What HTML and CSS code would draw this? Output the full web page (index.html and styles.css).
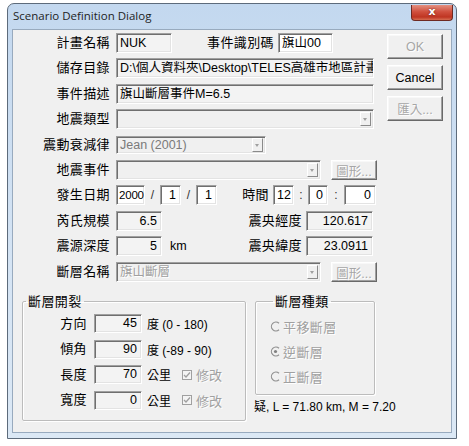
FILE: index.html
```html
<!DOCTYPE html>
<html lang="zh-Hant">
<head>
    <meta charset="UTF-8">
    <title>Scenario Definition Dialog</title>
    <link rel="stylesheet" href="styles.css">
</head>
<body>

<div class="window">
    <div class="titlebar">
        <span class="title">Scenario Definition Dialog</span>
        <span class="close">x</span>
    </div>

    <div class="client">
        <div class="top">
            <div class="form">
                <div class="row">
                    <span class="lbl">計畫名稱</span>
                    <div class="box w56">NUK</div>
                    <span class="lbl2 w102">事件識別碼</span>
                    <div class="box white w55">旗山00</div>
                </div>
                <div class="row">
                    <span class="lbl">儲存目錄</span>
                    <div class="box w258">D:\個人資料夾\Desktop\TELES高雄市地區計畫</div>
                </div>
                <div class="row">
                    <span class="lbl">事件描述</span>
                    <div class="box w258">旗山斷層事件M=6.5</div>
                </div>
                <div class="row">
                    <span class="lbl">地震類型</span>
                    <div class="combo w258"><span class="val"></span><span class="arrow"></span></div>
                </div>
                <div class="row">
                    <span class="lbl">震動衰減律</span>
                    <div class="combo w150 short"><span class="val dim">Jean (2001)</span><span class="arrow"></span></div>
                </div>
                <div class="row">
                    <span class="lbl">地震事件</span>
                    <div class="combo w205"><span class="val"></span><span class="arrow"></span></div>
                    <button class="btn small" disabled>圖形...</button>
                </div>
                <div class="row">
                    <span class="lbl">發生日期</span>
                    <div class="box white num year w29">2000</div>
                    <span class="sep w15">/</span>
                    <div class="box white num w21">1</div>
                    <span class="sep w15">/</span>
                    <div class="box white num w21">1</div>
                    <span class="lbl2 w52">時間</span>
                    <div class="box white num w21">12</div>
                    <span class="sep w14">:</span>
                    <div class="box white num w20">0</div>
                    <span class="sep w16">:</span>
                    <div class="box white num w32">0</div>
                </div>
                <div class="row">
                    <span class="lbl">芮氏規模</span>
                    <div class="box num w46">6.5</div>
                    <span class="lbl2 w140">震央經度</span>
                    <div class="box num w67">120.617</div>
                </div>
                <div class="row">
                    <span class="lbl">震源深度</span>
                    <div class="box num w46">5</div>
                    <span class="unit">km</span>
                    <span class="lbl2 w112">震央緯度</span>
                    <div class="box num w67">23.0911</div>
                </div>
                <div class="row">
                    <span class="lbl">斷層名稱</span>
                    <div class="combo w205"><span class="val off">旗山斷層</span><span class="arrow"></span></div>
                    <button class="btn small" disabled>圖形...</button>
                </div>
            </div>

            <div class="buttons">
                <button class="btn" disabled>OK</button>
                <button class="btn">Cancel</button>
                <button class="btn" disabled>匯入...</button>
            </div>
        </div>

        <div class="bottom">
            <fieldset class="group crack">
                <legend>斷層開裂</legend>
                <div class="grow">
                    <span class="glbl">方向</span>
                    <div class="box num w48 h18">45</div>
                    <span class="after">度 (0 - 180)</span>
                </div>
                <div class="grow">
                    <span class="glbl">傾角</span>
                    <div class="box num w48 h18">90</div>
                    <span class="after">度 (-89 - 90)</span>
                </div>
                <div class="grow">
                    <span class="glbl">長度</span>
                    <div class="box num w48 h18">70</div>
                    <span class="after">公里</span>
                    <span class="check"><svg width="10" height="10" viewBox="0 0 10 10"><rect x="0.5" y="0.5" width="9" height="9" fill="#f4f4f4" stroke="#a0a0a0"/><path d="M2 5 L4 7 L8 2.5" fill="none" stroke="#a0a0a0" stroke-width="1.3"/></svg>修改</span>
                </div>
                <div class="grow">
                    <span class="glbl">寬度</span>
                    <div class="box num w48 h18">0</div>
                    <span class="after">公里</span>
                    <span class="check"><svg width="10" height="10" viewBox="0 0 10 10"><rect x="0.5" y="0.5" width="9" height="9" fill="#f4f4f4" stroke="#a0a0a0"/><path d="M2 5 L4 7 L8 2.5" fill="none" stroke="#a0a0a0" stroke-width="1.3"/></svg>修改</span>
                </div>
            </fieldset>

            <div class="side">
                <fieldset class="group kind">
                    <legend>斷層種類</legend>
                    <div class="radio">
                        <svg width="11" height="11" viewBox="0 0 11 11"><path d="M9 2.2 A4.5 4.5 0 1 0 9 8.8" fill="none" stroke="#909090" stroke-width="1.2"/></svg>
                        平移斷層
                    </div>
                    <div class="radio">
                        <svg width="11" height="11" viewBox="0 0 11 11"><path d="M9 2.2 A4.5 4.5 0 1 0 9 8.8" fill="none" stroke="#909090" stroke-width="1.2"/><circle cx="5.5" cy="5.5" r="1.6" fill="#808080"/></svg>
                        逆斷層
                    </div>
                    <div class="radio">
                        <svg width="11" height="11" viewBox="0 0 11 11"><path d="M9 2.2 A4.5 4.5 0 1 0 9 8.8" fill="none" stroke="#909090" stroke-width="1.2"/></svg>
                        正斷層
                    </div>
                </fieldset>
                <div class="result">疑, L = 71.80 km, M = 7.20</div>
            </div>
        </div>
    </div>
</div>

</body>
</html>
```

FILE: styles.css
```css
body {
    margin: 0;
    background: #ffffff;
    font-family: "Liberation Sans", "Noto Sans CJK TC", sans-serif;
    color: #000;
}

/* window frame */
.window {
    box-sizing: border-box;
    width: 450px;
    height: 436px;
    margin: 3px 0 0 7px;
    border: 1px solid #5d6b7b;
    border-radius: 7px 7px 0 0;
    background: linear-gradient(to bottom, #c3d8ef, #d5e4f4 60%, #dbe8f5);
    display: flex;
    flex-direction: column;
}
.titlebar {
    height: 25px;
    display: flex;
    justify-content: space-between;
    align-items: flex-start;
}
.title {
    padding-left: 5px;
    margin-top: 4px;
    font-family: "Open Sans", "Noto Sans", sans-serif;
    font-size: 11.5px;
    line-height: 16px;
    color: #1e1e1e;
}
.close {
    width: 40px;
    height: 15px;
    margin: 1px 3px 0 0;
    border: 1px solid #6e2a22;
    border-top: none;
    border-radius: 0 0 4px 4px;
    background: linear-gradient(to bottom, #e39080, #d0503e 45%, #bf3522 80%, #d66e52);
    color: #fff;
    font: bold 11px/14px "DejaVu Sans", sans-serif;
    text-align: center;
    text-shadow: 0 0 2px #5a1a10;
}
.client {
    flex: 1;
    margin: 0 4px 5px 4px;
    background: #f0f0f0;
    border: 1px solid #98aabe;
    box-sizing: border-box;
}

/* upper part: form + buttons */
.top {
    display: flex;
    padding-top: 3px;
}
.form {
    width: 365px;
    display: flex;
    flex-direction: column;
    gap: 5.4px;
}
.row {
    height: 20px;
    display: flex;
    align-items: center;
}
.lbl {
    width: 97px;
    margin-right: 6px;
    text-align: right;
    font-size: 13px;
    letter-spacing: 0.4px;
    line-height: 20px;
    white-space: nowrap;
}
.lbl2 {
    text-align: right;
    margin-right: 4px;
    font-size: 13px;
    letter-spacing: 0.4px;
    line-height: 20px;
    white-space: nowrap;
}
.sep {
    text-align: center;
    font-size: 12px;
    color: #333;
}
.unit {
    width: 20px;
    margin-left: 8px;
    font-size: 12.5px;
}

/* sunken edit box */
.box {
    box-sizing: border-box;
    height: 20px;
    padding: 0 3px;
    border: 1px solid;
    border-color: #a0a0a0 #ffffff #ffffff #a0a0a0;
    box-shadow: inset 1px 1px 0 #6f6f6f, inset -1px -1px 0 #e3e3e3;
    background: #f3f3f3;
    font-size: 12.5px;
    line-height: 18px;
    white-space: nowrap;
    overflow: hidden;
}
.box.white {
    background: #ffffff;
}
.box.num {
    text-align: right;
    padding-right: 4px;
}
.box.year {
    padding: 0 1px 0 2px;
    font-size: 11.5px;
    letter-spacing: -0.2px;
}
.box.h18 {
    height: 19px;
    line-height: 17px;
}

/* combo box */
.combo {
    box-sizing: border-box;
    height: 20px;
    display: flex;
    align-items: center;
    border: 1px solid;
    border-color: #a0a0a0 #ffffff #ffffff #a0a0a0;
    box-shadow: inset 1px 1px 0 #6f6f6f, inset -1px -1px 0 #e3e3e3;
    background: #f0f0f0;
    padding: 0 2px 0 3px;
}
.combo.short {
    height: 18px;
}
.combo .val {
    flex: 1;
    font-size: 12.5px;
    line-height: 16px;
    white-space: nowrap;
}
.val.dim {
    color: #7a7a7a;
}
.val.off {
    color: #a0a0a0;
    text-shadow: 1px 1px 0 #fff;
}
.arrow {
    box-sizing: border-box;
    width: 11px;
    height: 14px;
    border: 1px solid;
    border-color: #ffffff #8a8a8a #8a8a8a #ffffff;
    background: #f0f0f0;
    position: relative;
}
.arrow::after {
    content: "";
    position: absolute;
    left: 2px;
    top: 5px;
    border-left: 2.5px solid transparent;
    border-right: 2.5px solid transparent;
    border-top: 3px solid #a0a0a0;
}

/* push buttons */
.btn {
    box-sizing: border-box;
    width: 56px;
    height: 25px;
    padding: 0;
    border: 1px solid;
    border-color: #ffffff #696969 #696969 #ffffff;
    box-shadow: inset -1px -1px 0 #a0a0a0, inset 1px 1px 0 #f8f8f8;
    background: #f0f0f0;
    font-family: "Liberation Sans", "Noto Sans CJK TC", sans-serif;
    font-size: 12.5px;
    color: #000;
}
.btn:disabled {
    color: #a6a6a6;
    text-shadow: 1px 1px 0 #ffffff;
}
.btn.small {
    width: 46px;
    height: 20px;
    margin-left: 10px;
    font-size: 12.5px;
}
.buttons {
    margin-left: 9px;
    display: flex;
    flex-direction: column;
    gap: 6px;
    padding-top: 1px;
}

/* group boxes */
.bottom {
    display: flex;
    align-items: flex-start;
    margin-top: 11px;
    padding-left: 9px;
}
.group {
    margin: 0;
    border: 1px solid #bcbcbc;
    box-shadow: inset 1px 1px 0 #fff, 1px 1px 0 #fff;
    border-radius: 2px;
}
.group legend {
    padding: 0 2px;
    margin-left: 3px;
    font-size: 13px;
    letter-spacing: 0.4px;
    line-height: 18px;
}
.crack {
    box-sizing: border-box;
    width: 224px;
    height: 128px;
    padding: 3px 0 0 0;
    display: flex;
    flex-direction: column;
    gap: 5.6px;
}
.grow {
    height: 20px;
    display: flex;
    align-items: center;
}
.glbl {
    width: 64px;
    margin-right: 7px;
    text-align: right;
    font-size: 13px;
    letter-spacing: 0.4px;
    line-height: 20px;
}
.after {
    margin-left: 5px;
    font-size: 12px;
    white-space: nowrap;
}
.check {
    display: flex;
    align-items: center;
    gap: 4px;
    margin-left: 11px;
    font-size: 13px;
    color: #a0a0a0;
    text-shadow: 1px 1px 0 #fff;
}

.side {
    margin-left: 9px;
}
.kind {
    box-sizing: border-box;
    width: 120px;
    height: 102px;
    padding: 6px 0 0 14px;
    display: flex;
    flex-direction: column;
    gap: 5px;
}
.radio {
    height: 20px;
    display: flex;
    align-items: center;
    gap: 2px;
    font-size: 13px;
    letter-spacing: 0.4px;
    color: #a0a0a0;
    text-shadow: 1px 1px 0 #fff;
}
.result {
    margin-top: 4px;
    margin-left: -1px;
    font-size: 12px;
    line-height: 16px;
    white-space: nowrap;
}

/* widths */
.w15 { width: 15px; }
.w14 { width: 14px; }
.w16 { width: 16px; }
.w20 { width: 20px; }
.w21 { width: 21px; }
.w29 { width: 29px; }
.w32 { width: 32px; }
.w46 { width: 46px; }
.w48 { width: 48px; }
.w52 { width: 52px; }
.w55 { width: 55px; }
.w56 { width: 56px; }
.w67 { width: 67px; }
.w102 { width: 102px; }
.w112 { width: 112px; }
.w140 { width: 140px; }
.w150 { width: 150px; }
.w205 { width: 205px; }
.w258 { width: 258px; }
```
